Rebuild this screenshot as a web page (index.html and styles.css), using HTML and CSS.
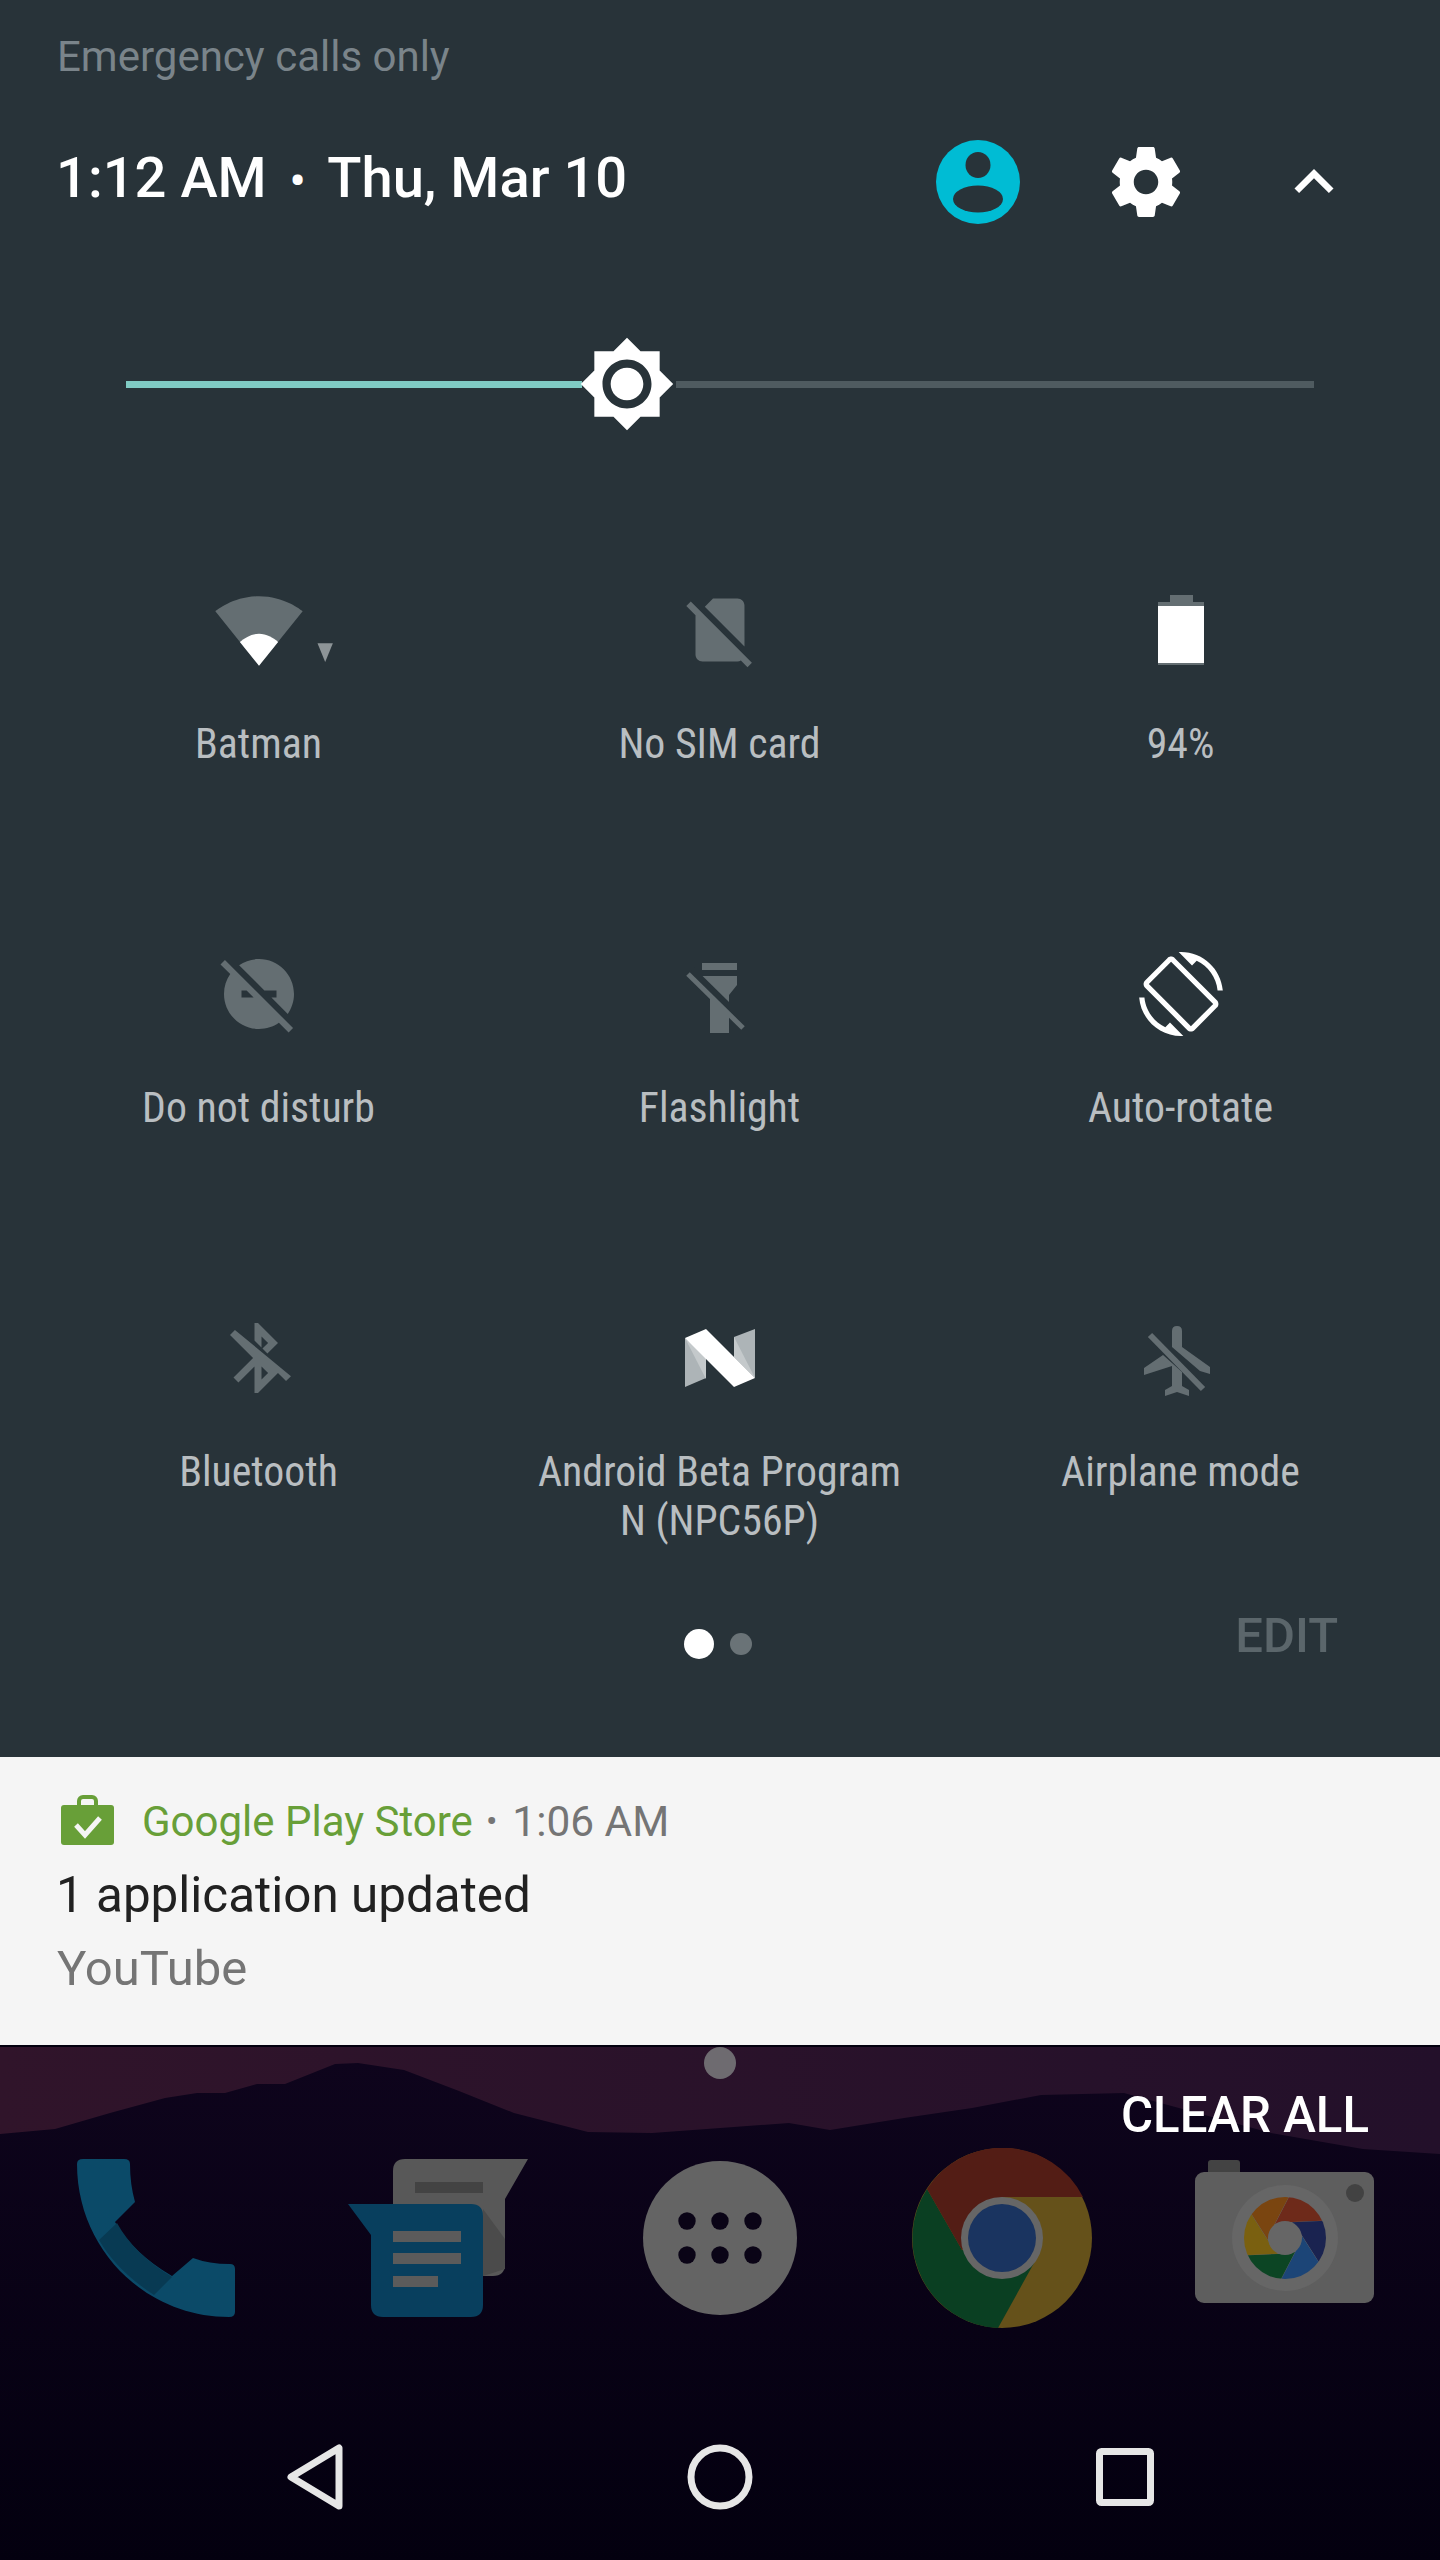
FILE: index.html
```html
<!DOCTYPE html>
<html lang="en">
<head>
  <meta charset="UTF-8">
  <title>Quick Settings</title>
  <link rel="stylesheet" href="styles.css">
</head>
<body>
  <section class="panel">
    <p class="carrier">Emergency calls only</p>

    <div class="date-row">
      <div class="date">1:12 AM <span class="date-dot">•</span> Thu, Mar 10</div>
      <svg class="avatar" viewBox="0 0 84 84">
        <circle cx="42" cy="42" r="42" fill="#00bcd4"/>
        <ellipse cx="42" cy="25" rx="12.5" ry="13" fill="#283339"/>
        <ellipse cx="42" cy="59" rx="25" ry="13.5" fill="#283339"/>
      </svg>
      <svg class="gear" viewBox="0 0 24 24">
        <path fill="#fff" d="M19.43 12.98c.04-.32.07-.64.07-.98s-.03-.66-.07-.98l2.11-1.65c.19-.15.24-.42.12-.64l-2-3.46c-.12-.22-.39-.3-.61-.22l-2.49 1c-.52-.4-1.08-.73-1.69-.98l-.38-2.65C14.46 2.18 14.25 2 14 2h-4c-.25 0-.46.18-.49.42l-.38 2.65c-.61.25-1.17.59-1.69.98l-2.49-1c-.23-.09-.49 0-.61.22l-2 3.46c-.13.22-.07.49.12.64l2.11 1.65c-.04.32-.07.65-.07.98s.03.66.07.98l-2.11 1.65c-.19.15-.24.42-.12.64l2 3.46c.12.22.39.3.61.22l2.49-1c.52.4 1.08.73 1.69.98l.38 2.65c.03.24.24.42.49.42h4c.25 0 .46-.18.49-.42l.38-2.65c.61-.25 1.17-.59 1.69-.98l2.49 1c.23.09.49 0 .61-.22l2-3.46c.12-.22.07-.49-.12-.64l-2.11-1.65zM12 15.5c-1.93 0-3.5-1.57-3.5-3.5s1.57-3.5 3.5-3.5 3.5 1.57 3.5 3.5-1.57 3.5-3.5 3.5z"/>
      </svg>
      <svg class="chevron" viewBox="0 0 24 24">
        <path fill="#fff" d="M12 8l-6 6 1.41 1.41L12 10.83l4.59 4.58L18 14z"/>
      </svg>
    </div>

    <div class="brightness">
      <div class="track track-on"></div>
      <svg class="thumb" viewBox="0 0 24 24">
        <path fill="#fff" d="M20 8.69V4h-4.69L12 .69 8.69 4H4v4.69L.69 12 4 15.31V20h4.69L12 23.31 15.31 20H20v-4.69L23.31 12 20 8.69zM12 18c-3.31 0-6-2.69-6-6s2.69-6 6-6 6 2.69 6 6-2.69 6-6 6zm0-10c-2.21 0-4 1.79-4 4s1.79 4 4 4 4-1.79 4-4-1.79-4-4-4z"/>
      </svg>
      <div class="track track-off"></div>
    </div>

    <div class="tiles">
      <div class="tile">
        <div class="tile-icon">
          <svg class="icon-wifi" viewBox="0 0 24 24">
            <path class="off" d="M12.01 21.49L23.64 7c-.45-.34-4.93-4-11.64-4C5.28 3 .81 6.66.36 7l11.63 14.49.01.01.01-.01z"/>
            <path fill="#fff" d="M12 21.5L6.9 15.2C8.3 14 10 13 12 13s3.7 1 5.1 2.2z"/>
            <polygon fill="#8d9497" points="27.6,15.5 31.7,15.5 29.65,20.5"/>
          </svg>
        </div>
        <div class="tile-label">Batman</div>
      </div>
      <div class="tile">
        <div class="tile-icon">
          <svg class="icon" viewBox="0 0 24 24">
            <path class="off" d="M18.99 5c0-1.1-.89-2-1.99-2h-7L7.66 5.34 19 16.68 18.99 5zM3.65 3.88L2.38 5.15 5 7.77V19c0 1.1.9 2 2 2h10.01c.35 0 .67-.1.96-.26l1.88 1.88 1.27-1.27L3.65 3.88z"/>
          </svg>
        </div>
        <div class="tile-label">No SIM card</div>
      </div>
      <div class="tile">
        <div class="tile-icon">
          <svg class="icon-battery" viewBox="0 0 46 70">
            <rect class="off" x="12" y="0" width="23" height="8"/>
            <rect class="off" x="0" y="7" width="46" height="63"/>
            <rect x="0" y="11" width="46" height="57" fill="#fff"/>
          </svg>
        </div>
        <div class="tile-label">94%</div>
      </div>

      <div class="tile">
        <div class="tile-icon">
          <svg class="icon" viewBox="0 0 24 24">
            <path class="off" d="M17 11v2h-1.46l4.68 4.68C21.34 16.07 22 14.11 22 12c0-5.52-4.48-10-10-10-2.11 0-4.07.66-5.68 1.78L13.54 11H17zM2.27 2.27L1 3.54l2.78 2.78C2.66 7.93 2 9.89 2 12c0 5.52 4.48 10 10 10 2.11 0 4.07-.66 5.68-1.78L20.46 23l1.27-1.27L11 11 2.27 2.27zM7 13v-2h1.46l2 2H7z"/>
          </svg>
        </div>
        <div class="tile-label">Do not disturb</div>
      </div>
      <div class="tile">
        <div class="tile-icon">
          <svg class="icon" viewBox="0 0 84 84">
            <rect class="off" x="24" y="11" width="35" height="7"/>
            <polygon class="off" points="24,24 59,24 59,33 51,43 51,81 32,81 32,43 24,33"/>
            <line x1="13" y1="19" x2="68" y2="73" stroke="#283339" stroke-width="9"/>
            <line x1="10" y1="22" x2="65" y2="76" stroke="#646e72" stroke-width="5"/>
          </svg>
        </div>
        <div class="tile-label">Flashlight</div>
      </div>
      <div class="tile">
        <div class="tile-icon">
          <svg class="icon" viewBox="0 0 24 24">
            <path fill="#fff" d="M16.48 2.52c3.27 1.55 5.61 4.72 5.97 8.48h1.5C23.44 4.84 18.29 0 12 0l-.66.03 3.81 3.81 1.33-1.32zm-6.25-.77c-.59-.59-1.54-.59-2.12 0L1.75 8.11c-.59.59-.59 1.54 0 2.12l12.02 12.02c.59.59 1.54.59 2.12 0l6.36-6.36c.59-.59.59-1.54 0-2.12L10.23 1.75zm4.6 19.44L2.81 9.17l6.36-6.36 12.02 12.02-6.36 6.36zm-7.31.29C4.25 19.94 1.91 16.76 1.55 13H.05C.56 19.16 5.71 24 12 24l.66-.03-3.81-3.81-1.33 1.32z"/>
          </svg>
        </div>
        <div class="tile-label">Auto-rotate</div>
      </div>

      <div class="tile">
        <div class="tile-icon">
          <svg class="icon icon-bluetooth" viewBox="0 0 24 24">
            <path class="off" d="M13 5.83l1.88 1.88-1.6 1.6 1.41 1.41 3.02-3.02L12 2h-1v5.03l2 2v-3.2zM5.41 4L4 5.41 10.59 12 5 17.59 6.41 19 11 14.41V22h1l5.71-5.71 2.3 2.3 1.41-1.41L5.41 4zM13 18.17v-3.76l1.88 1.88L13 18.17z"/>
          </svg>
        </div>
        <div class="tile-label">Bluetooth</div>
      </div>
      <div class="tile">
        <div class="tile-icon">
          <svg class="icon-n" viewBox="0 0 70 58">
            <polygon fill="#adb4b7" points="0,9 21,28 21,49 0,58"/>
            <polygon fill="#adb4b7" points="49,8 70,0 70,49 49,28"/>
            <polygon fill="#c4c9cb" points="0,9 21,28 21,50"/>
            <polygon fill="#c4c9cb" points="49,8 49,28 70,49"/>
            <polygon fill="#fff" points="0,9 21,0 70,49 49,58"/>
          </svg>
        </div>
        <div class="tile-label">Android Beta Program<br>N (NPC56P)</div>
      </div>
      <div class="tile">
        <div class="tile-icon">
          <svg class="icon icon-plane" viewBox="0 0 84 84">
            <path class="off" d="M36 31V15q0-5 5-5t5 5V31L74 51V58L64 55Z"/>
            <path class="off" d="M27 39L8 52V59L36 50V70L29 74V80L41 76 53 80V74L46 70V56Z"/>
            <line x1="14" y1="19" x2="67" y2="73" stroke="#646e72" stroke-width="6"/>
          </svg>
        </div>
        <div class="tile-label">Airplane mode</div>
      </div>
    </div>

    <div class="panel-foot">
      <span></span>
      <div class="pager">
        <span class="pager-dot pager-dot-on"></span>
        <span class="pager-dot"></span>
      </div>
      <div class="edit">EDIT</div>
    </div>
  </section>

  <section class="notification">
    <div class="notif-head">
      <svg class="notif-icon" viewBox="0 0 53 50">
        <rect x="18" y="2" width="17" height="14" rx="4" fill="none" stroke="#689f38" stroke-width="4"/>
        <rect x="0" y="10" width="53" height="40" rx="3" fill="#689f38"/>
        <polyline points="15,30 24,40 39,23" fill="none" stroke="#f5f5f5" stroke-width="5"/>
      </svg>
      <span class="notif-app">Google Play Store</span>
      <span class="notif-sep">•</span>
      <span class="notif-time">1:06 AM</span>
    </div>
    <div class="notif-title">1 application updated</div>
    <div class="notif-text">YouTube</div>
  </section>

  <section class="home">
    <svg class="wallpaper" viewBox="0 0 1440 515" preserveAspectRatio="none">
      <defs>
        <linearGradient id="sky" x1="0" x2="1" y1="0" y2="0">
          <stop offset="0" stop-color="#30142a"/>
          <stop offset="1" stop-color="#23102a"/>
        </linearGradient>
        <linearGradient id="land" x1="0" x2="0" y1="0" y2="1">
          <stop offset="0" stop-color="#0e041c"/>
          <stop offset="1" stop-color="#03000f"/>
        </linearGradient>
      </defs>
      <rect width="1440" height="515" fill="url(#sky)"/>
      <path fill="url(#land)" d="M0 87L55 82 110 66 165 51 197 46 225 46 257 37 285 37 335 17 358 16 404 23 459 44 514 66 588 85 652 86 720 81 789 76 830 83 904 71 972 61 1041 48 1124 46 1179 61 1271 86 1363 102 1440 107V515H0Z"/>
    </svg>

    <div class="handle"></div>
    <div class="clear-all">CLEAR ALL</div>

    <div class="dock">
      <svg class="app-phone" viewBox="0 0 158 158">
        <path fill="#0b4a68" d="M0 5Q0 0 6 0H47Q53 0 53 5Q53 25 58 43L38 63Q57 95 95 117L116 99Q132 105 153 105Q158 105 158 110V153Q158 158 152 158C68 158 0 90 0 5Z"/>
        <path fill="#083a53" d="M40 64Q57 95 95 118L77 136Q40 112 22 81Z"/>
      </svg>
      <svg class="app-messenger" viewBox="0 0 180 158">
        <path fill="#585858" d="M45 12Q45 0 57 0H180L157 40V105Q157 117 145 117H45Z"/>
        <rect x="67" y="23" width="68" height="11" fill="#434343"/>
        <polygon fill="#4b4b4b" points="135,50 157,80 157,110 135,117"/>
        <path fill="#083f5e" d="M0 45H123Q135 45 135 57V146Q135 158 123 158H35Q23 158 23 146V76Z"/>
        <rect x="45" y="72" width="68" height="11" fill="#5b5b5b"/>
        <rect x="45" y="94" width="68" height="11" fill="#5b5b5b"/>
        <rect x="45" y="117" width="45" height="11" fill="#5b5b5b"/>
      </svg>
      <svg class="app-launcher" viewBox="0 0 154 154">
        <circle cx="77" cy="77" r="77" fill="#646464"/>
        <g fill="#0a0416">
          <circle cx="44" cy="60" r="8.7"/>
          <circle cx="77" cy="60" r="8.7"/>
          <circle cx="110" cy="60" r="8.7"/>
          <circle cx="44" cy="94" r="8.7"/>
          <circle cx="77" cy="94" r="8.7"/>
          <circle cx="110" cy="94" r="8.7"/>
        </g>
      </svg>
      <svg class="app-chrome" viewBox="-90 -90 180 180">
        <circle r="90" fill="#65511a"/>
        <path fill="#0a3f22" d="M-75 -49A90 90 0 0 0 -4 90L32 25L-40 12Z"/>
        <path fill="#531d15" d="M81 -41A90 90 0 0 0 -75 -49L-40 12L0 -41Z"/>
        <circle r="41" fill="#666"/>
        <circle r="34" fill="#1a3460"/>
      </svg>
      <svg class="app-camera" viewBox="0 0 179 158">
        <defs>
          <clipPath id="lens"><circle r="41"/></clipPath>
        </defs>
        <rect x="13" y="1" width="32" height="20" rx="3" fill="#434343"/>
        <rect x="0" y="13" width="179" height="131" rx="9" fill="#5e5e5e"/>
        <circle cx="160" cy="34" r="9" fill="#424242"/>
        <g transform="translate(90 79)">
          <circle r="53" fill="#666"/>
          <g clip-path="url(#lens)">
            <polygon fill="#6e2a1a" points="-10,-14 32,-95 98,-20 7,-16"/>
            <polygon fill="#1a2350" points="-10,-14 32,-95 98,-20 7,-16" transform="rotate(60)"/>
            <polygon fill="#1c4577" points="-10,-14 32,-95 98,-20 7,-16" transform="rotate(120)"/>
            <polygon fill="#0c4524" points="-10,-14 32,-95 98,-20 7,-16" transform="rotate(180)"/>
            <polygon fill="#7a6010" points="-10,-14 32,-95 98,-20 7,-16" transform="rotate(240)"/>
            <polygon fill="#7a4510" points="-10,-14 32,-95 98,-20 7,-16" transform="rotate(300)"/>
          </g>
          <circle r="17" fill="#666"/>
        </g>
      </svg>
    </div>

    <div class="nav">
      <svg class="nav-back" viewBox="0 0 56 66">
        <polygon points="4,33 52,4 52,62" fill="none" stroke="#e6e6e6" stroke-width="7" stroke-linejoin="round"/>
      </svg>
      <svg class="nav-home" viewBox="0 0 66 66">
        <circle cx="33" cy="33" r="29" fill="none" stroke="#e6e6e6" stroke-width="7"/>
      </svg>
      <svg class="nav-recent" viewBox="0 0 58 58">
        <rect x="3.5" y="3.5" width="51" height="51" rx="2" fill="none" stroke="#e6e6e6" stroke-width="7"/>
      </svg>
    </div>
  </section>
</body>
</html>
```

FILE: styles.css
```css
:root {
  --panel-bg: #283339;
  --icon-off: #646e72;
  --label: #b9bec1;
}

* {
  box-sizing: border-box;
}

body {
  margin: 0;
  width: 1440px;
  height: 2560px;
  overflow: hidden;
  font-family: Roboto, "Noto Sans", sans-serif;
  background-color: #03000f;
}

svg {
  display: block;
}

.off {
  fill: var(--icon-off);
}

/* Quick settings panel */
.panel {
  height: 1757px;
  background-color: var(--panel-bg);
}

.carrier {
  margin: 0;
  padding: 33px 57px 0;
  font-size: 42px;
  line-height: 48px;
  color: #7a848a;
}

.date-row {
  display: flex;
  align-items: center;
  height: 84px;
  margin-top: 59px;
  padding: 0 87px 0 57px;
}

.date {
  flex: 1;
  margin-top: -8px;
  margin-left: -1px;
  font-size: 56.1px;
  font-weight: 500;
  color: #fff;
}

.date-dot {
  margin: 0 9px;
  font-size: 46px;
}

.avatar,
.gear {
  width: 84px;
  height: 84px;
}

.gear {
  margin-left: 84px;
}

.chevron {
  width: 78px;
  height: 78px;
  margin-left: 87px;
}

.brightness {
  display: flex;
  align-items: center;
  height: 98px;
  margin: 111px 126px 0;
}

.track {
  height: 7px;
}

.track-on {
  flex: 0 0 456px;
  background-color: #80cbc4;
}

.track-off {
  flex: 1;
  background-color: #4f5b60;
}

.thumb {
  width: 98px;
  height: 98px;
  margin-left: -4px;
}

.tiles {
  display: grid;
  grid-template-columns: repeat(3, 461px);
  grid-template-rows: 364px 364px auto;
  margin-top: 152px;
  padding-left: 28px;
}

.tile {
  display: flex;
  flex-direction: column;
  align-items: center;
}

.tile-icon {
  display: flex;
  align-items: center;
  justify-content: center;
  height: 90px;
}

.icon {
  width: 84px;
  height: 84px;
}

.icon-bluetooth {
  margin-left: -2px;
}

.icon-plane {
  margin-left: -5px;
}

.icon-wifi {
  width: 90px;
  height: 90px;
  overflow: visible;
}

.icon-battery {
  width: 46px;
  height: 70px;
}

.icon-n {
  width: 70px;
  height: 58px;
}

.tile-label {
  margin-top: 44px;
  font-size: 41.8px;
  line-height: 49px;
  text-align: center;
  color: var(--label);
  font-stretch: condensed;
}

.panel-foot {
  display: grid;
  grid-template-columns: 1fr auto 1fr;
  align-items: center;
  height: 48px;
  margin-top: 62px;
  padding: 0 102px;
}

.pager {
  display: flex;
  align-items: center;
  gap: 16px;
  margin-left: -4px;
}

.pager-dot {
  width: 22px;
  height: 22px;
  border-radius: 50%;
  background-color: #6a7377;
}

.pager-dot-on {
  width: 30px;
  height: 30px;
  background-color: #fff;
}

.edit {
  justify-self: end;
  margin-bottom: 16px;
  font-size: 49px;
  font-weight: 500;
  color: #5b666b;
}

/* Notification card */
.notification {
  height: 288px;
  padding-top: 38px;
  background-color: #f5f5f5;
}

.notif-head {
  display: flex;
  align-items: center;
  height: 50px;
  padding-left: 61px;
  font-size: 42px;
  color: #757575;
}

.notif-icon {
  width: 53px;
  height: 50px;
  margin-right: 28px;
}

.notif-app {
  margin-top: 2px;
  color: #689f38;
}

.notif-sep {
  margin: 2px 15px 0 13px;
  font-size: 34px;
}

.notif-time {
  margin-top: 2px;
  font-size: 42.4px;
}

.notif-title,
.notif-text {
  padding-left: 57px;
  font-size: 49px;
  line-height: 74px;
}

.notif-title {
  margin-top: 13px;
  padding-left: 56px;
  font-size: 49.4px;
  color: #212121;
}

.notif-text {
  color: #757575;
}

/* Home screen behind the shade */
.home {
  position: relative;
  height: 515px;
}

.wallpaper {
  position: absolute;
  top: 0;
  left: 0;
  width: 100%;
  height: 100%;
}

.handle,
.clear-all,
.dock,
.nav {
  position: relative;
}

.handle {
  width: 32px;
  height: 32px;
  margin: 2px auto 0;
  border-radius: 50%;
  background-color: #6e6b70;
}

.clear-all {
  margin-top: 6px;
  padding-right: 71px;
  font-size: 49.2px;
  font-weight: 500;
  line-height: 60px;
  text-align: right;
  color: #fff;
}

.dock {
  display: grid;
  grid-template-columns: repeat(5, 282px);
  align-items: center;
  justify-items: center;
  height: 184px;
  margin-top: 1px;
  padding-left: 15px;
}

.app-phone {
  width: 158px;
  height: 158px;
}

.app-messenger {
  width: 180px;
  height: 158px;
}

.app-launcher {
  width: 154px;
  height: 154px;
}

.app-chrome {
  width: 180px;
  height: 180px;
}

.app-camera {
  width: 179px;
  height: 158px;
}

.nav {
  display: grid;
  grid-template-columns: repeat(3, 405px);
  align-items: center;
  justify-items: center;
  margin-top: 114px;
  padding-left: 112px;
}

.nav-back {
  width: 56px;
  height: 66px;
}

.nav-home {
  width: 66px;
  height: 66px;
}

.nav-recent {
  width: 58px;
  height: 58px;
}
```
